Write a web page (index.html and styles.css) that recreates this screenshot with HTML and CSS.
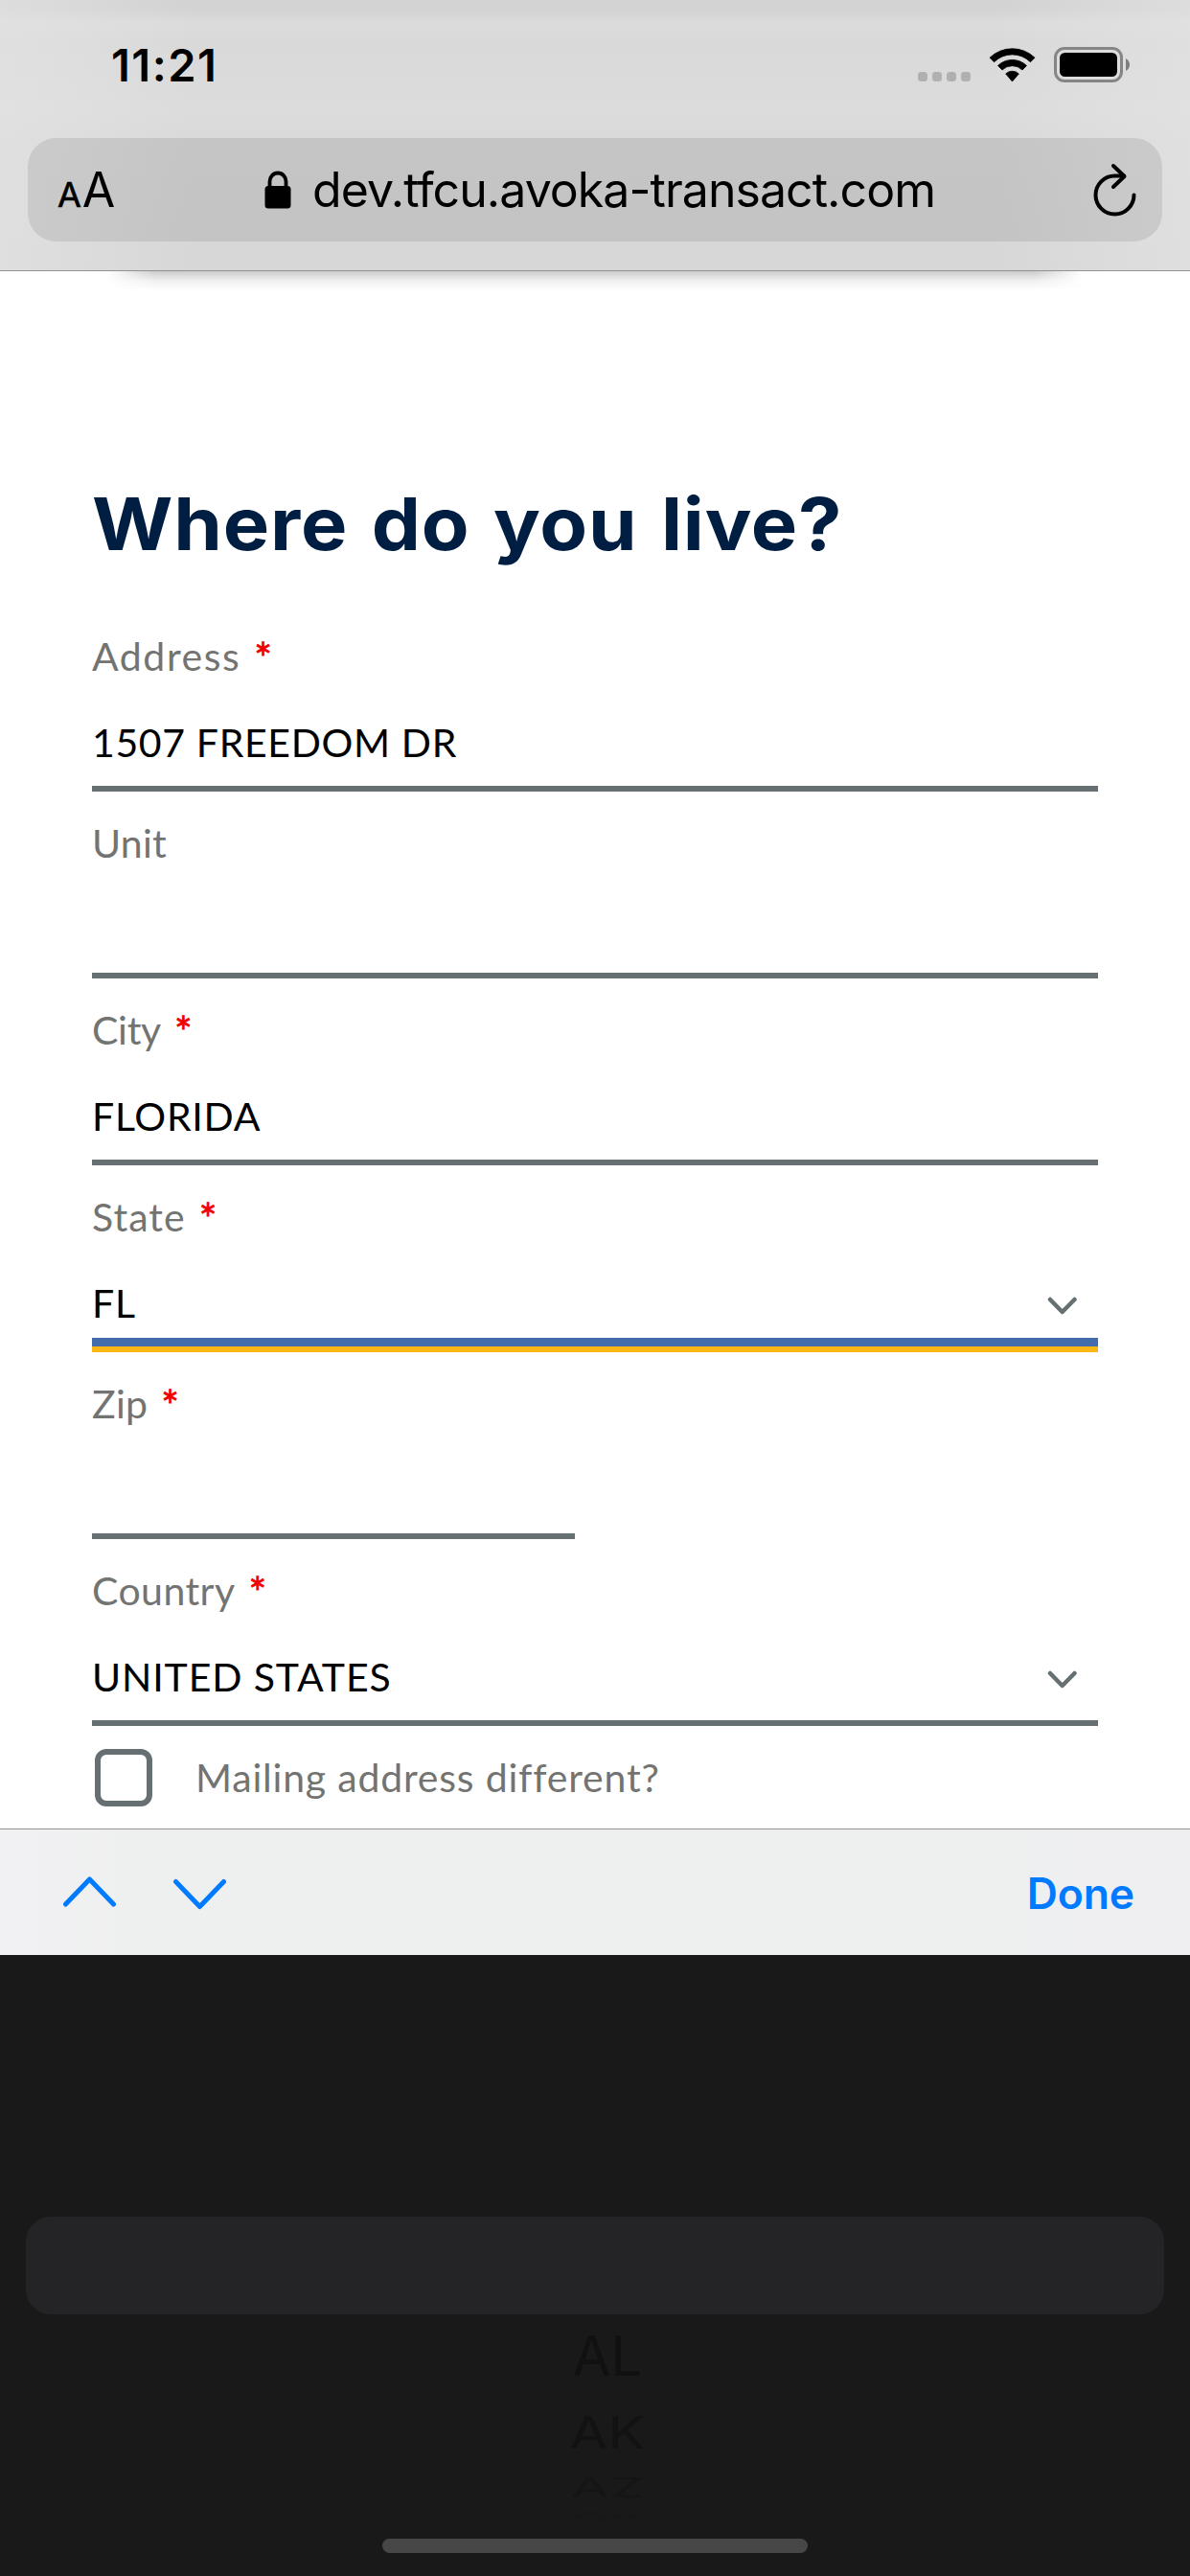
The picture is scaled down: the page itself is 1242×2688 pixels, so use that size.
FILE: index.html
```
<!DOCTYPE html>
<html lang="en">
<head>
<meta charset="utf-8">
<title>Where do you live?</title>
<link rel="stylesheet" href="styles.css">
</head>
<body>
<header class="browser">
  <div class="status">
    <span class="time">11:21</span>
    <svg class="indicators" width="222" height="38" viewBox="0 0 222 38" aria-hidden="true">
      <g fill="#b0b0b0">
        <rect x="0" y="26" width="10" height="10" rx="3.5"/>
        <rect x="15" y="26" width="10" height="10" rx="3.5"/>
        <rect x="30" y="26" width="10" height="10" rx="3.5"/>
        <rect x="45" y="26" width="10" height="10" rx="3.5"/>
      </g>
      <path d="M75 11.200 L79.500 15.700 A27 27 0 0 1 117.500 15.700 L122 11.200 A34 34 0 0 0 75 11.200Z M83.500 19.500 L88 24 A15 15 0 0 1 109 24 L113.500 19.500 A21.500 21.500 0 0 0 83.500 19.500Z M91.700 28 A9.700 9.700 0 0 1 105.300 28 L98.500 36Z" stroke="#000" stroke-width=".8" stroke-linejoin="round"/>
      <rect x="143.500" y="1.500" width="69" height="34" rx="9.500" fill="none" stroke="#858585" stroke-width="3"/>
      <rect x="148" y="6" width="60" height="25" rx="5.500"/>
      <path d="M217 12q4 2.500 4 6.500t-4 6.500z" fill="#7e7e7e"/>
    </svg>
  </div>
  <div class="address-bar">
    <span class="reader"><span class="reader-small">A</span><span class="reader-big">A</span></span>
    <svg class="lock" width="28" height="40" viewBox="0 0 28 40" aria-hidden="true">
      <rect x=".5" y="16" width="27" height="23.500" rx="3.500"/>
      <path d="M5.500 17V11.500a8.500 9 0 0 1 17 0V17" fill="none" stroke="#000" stroke-width="3.800"/>
    </svg>
    <span class="url">dev.tfcu.avoka-transact.com</span>
    <svg class="reload" width="50" height="58" viewBox="0 0 50 58" fill="none" stroke="#000" stroke-width="4" stroke-linecap="round" stroke-linejoin="round" aria-hidden="true">
      <path d="M44.500 34.500A20 20 0 1 1 24.500 14.500H34"/>
      <path d="M23 4l11.500 11L23 26"/>
    </svg>
  </div>
</header>

<main class="form">
  <h1 class="title"><span class="title-text">Where do you live?</span></h1>
  <div class="field">
    <div class="label"><span class="l-address">Address</span><i class="req">*</i></div>
    <div class="value"><span class="v-street">1507 FREEDOM DR</span></div>
  </div>
  <div class="field">
    <div class="label"><span class="l-unit">Unit</span></div>
    <div class="value"></div>
  </div>
  <div class="field">
    <div class="label"><span class="l-city">City</span><i class="req">*</i></div>
    <div class="value"><span class="v-city">FLORIDA</span></div>
  </div>
  <div class="field">
    <div class="label"><span class="l-state">State</span><i class="req">*</i></div>
    <div class="value focused"><span class="v-city">FL</span>
      <svg class="caret" width="32" height="20" viewBox="0 0 32 20" aria-hidden="true"><path d="M3 3l12.700 13L28.500 3"/></svg>
    </div>
  </div>
  <div class="field zip">
    <div class="label"><span class="l-zip">Zip</span><i class="req">*</i></div>
    <div class="value"></div>
  </div>
  <div class="field">
    <div class="label"><span class="l-country">Country</span><i class="req">*</i></div>
    <div class="value"><span class="v-country">UNITED STATES</span>
      <svg class="caret" width="32" height="20" viewBox="0 0 32 20" aria-hidden="true"><path d="M3 3l12.700 13L28.500 3"/></svg>
    </div>
  </div>
  <div class="check-row"><span class="checkbox"></span><span class="check-label">Mailing address different?</span></div>
</main>

<div class="toolbar">
  <svg class="step" width="170" height="40" viewBox="0 0 170 40" aria-hidden="true">
    <path d="M2.500 31l25-26 25 26M117.500 7.500l25 26 25-26"/>
  </svg>
  <span class="done">Done</span>
</div>

<div class="picker">
  <div class="selected"></div>
  <div class="option o1"><span>AL</span></div>
  <div class="option o2"><span>AK</span></div>
  <div class="option o3"><span>AZ</span></div>
  <div class="option o4"><span>AR</span></div>
  <div class="home"></div>
</div>
</body>
</html>
```
FILE: styles.css
```
* { box-sizing: border-box; }
body { margin: 0; width: 1242px; height: 2688px; overflow: hidden; background: #fff; font-family: Inter, "Liberation Sans", sans-serif; color: #000; }

.browser {
  position: relative;
  height: 283px;
  padding: 0 29px;
  border-bottom: 1px solid #929292;
  background:
    linear-gradient(90deg, rgba(228,228,228,.6), rgba(228,228,228,.35) 90px, transparent 200px, transparent 1042px, rgba(228,228,228,.35) 1152px, rgba(228,228,228,.6)),
    linear-gradient(#d2d2d2, #d4d4d4 12px, #dcdcdc 24px, #d9d9d9 45px, #dcdcdc 115px, #d9d9d9 150px, #d7d7d7);
}
/* soft shadow of the page card that sits under the bar */
.browser::after {
  content: "";
  position: absolute;
  left: 112px; right: 112px; top: 283px;
  height: 20px;
  background: linear-gradient(rgba(0,0,0,.2), rgba(0,0,0,.06) 50%, transparent);
  -webkit-mask: linear-gradient(90deg, transparent, #000 50px, #000 calc(100% - 50px), transparent);
  mask: linear-gradient(90deg, transparent, #000 50px, #000 calc(100% - 50px), transparent);
}
.status { display: flex; height: 144px; padding: 0 34px 9px 87px; align-items: center; justify-content: space-between; }
.time { font-size: 47px; font-weight: 600; letter-spacing: 1.5px; }
.indicators { margin-right: -1px; }

.address-bar { display: flex; align-items: center; height: 108px; padding: 0 24px 0 31px; border-radius: 30px; background: rgba(0,0,0,.09); }
.reader { display: flex; align-items: baseline; width: 216px; }
.reader-small { font-size: 36px; margin-right: 1px; -webkit-text-stroke: .6px #000; }
.reader-big { font-size: 50px; }
.lock { margin-right: 22px; }
.url { flex: 1; font-size: 50px; letter-spacing: -.95px; white-space: nowrap; font-variant-ligatures: none; }

.form { height: 1625px; padding: 213px 96px 0; font-family: Lato, "Liberation Sans", sans-serif; font-size: 41px; line-height: 60px; white-space: nowrap; }
.title { margin: 0 0 35px; font: 700 76px/100px Inter, sans-serif; color: #001e41; }
.title-text { display: inline-block; letter-spacing: .8px; word-spacing: 4px; transform: scaleX(1.07); transform-origin: 0 50%; }
.field { height: 195px; padding-top: 24px; }
.label { display: flex; height: 60px; color: #737471; }
.req { font-style: normal; color: #f00000; margin: 1px 0 0 14px; font-size: 44px; -webkit-text-stroke: .8px #f00000; }
.value { display: flex; justify-content: space-between; height: 111px; padding-top: 30px; border-bottom: 6px solid #667072; }
.focused { height: 105px; border-bottom: 9px solid #426cab; box-shadow: 0 6px #fdb714; }
.zip .value { width: 504px; }
.caret { margin: 23px 21px 0 0; fill: none; stroke: #667072; stroke-width: 4.500px; stroke-linecap: round; stroke-linejoin: round; }
.l-address { letter-spacing: 1.55px; }
.l-unit { letter-spacing: .25px; }
.l-city { letter-spacing: -.3px; }
.l-state { letter-spacing: 1.07px; }
.l-zip { letter-spacing: .3px; }
.l-country { letter-spacing: .45px; }
.v-street { letter-spacing: .65px; }
.v-city { letter-spacing: .75px; }
.v-country { letter-spacing: .89px; }

.check-row { display: flex; align-items: center; height: 60px; margin: 24px 0 0 3px; }
.checkbox { width: 60px; height: 60px; border: 6px solid #667072; border-radius: 12px; margin-right: 45px; }
.check-label { color: #737471; letter-spacing: .8px; }

.toolbar { display: flex; align-items: center; justify-content: space-between; height: 132px; padding: 3px 58px 0 66px; border-top: 1px solid #929292; background: linear-gradient(90deg, #f1f1f3, #eeefef 160px, #eeefef 1000px, #efeff2); }
.step { fill: none; stroke: #007aff; stroke-width: 5px; stroke-linecap: round; stroke-linejoin: round; }
.done { font-size: 44.500px; font-weight: 600; color: #007aff; letter-spacing: -.1px; }

.picker { height: 648px; padding-top: 273px; background: #191919; }
.selected { height: 102px; margin: 0 27px; border-radius: 26px; background: #242426; }
.option { display: flex; justify-content: center; padding-left: 26px; font-size: 58px; }
.o1 { height: 86px; line-height: 86px; color: #111; }
.o2 { height: 75px; line-height: 75px; color: #121212; }
.o2 span { transform: scaleY(.79); }
.o3 { height: 40px; line-height: 40px; color: #151515; }
.o3 span { transform: scaleY(.48); }
.o4 { height: 18px; line-height: 18px; color: #181818; }
.o4 span { transform: scaleY(.19); }
.home { width: 444px; height: 15px; margin: 15px auto 0; border-radius: 8px; background: #474747; }
```
